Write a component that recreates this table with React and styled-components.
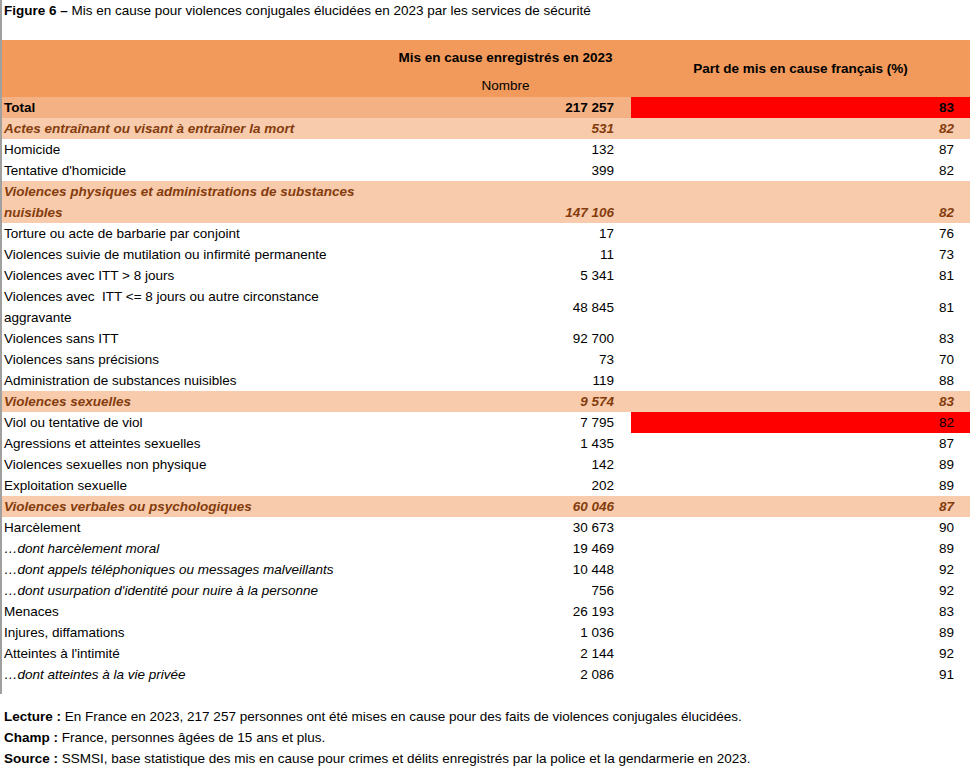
import React from 'react';
import styled, { createGlobalStyle, css } from 'styled-components';

const GlobalStyle = createGlobalStyle`
  html, body {
    margin: 0;
    padding: 0;
    background: #ffffff;
  }
  body {
    font-family: "Liberation Sans", Arial, sans-serif;
    color: #000000;
  }
`;

const Page = styled.div`
  width: 972px;
  height: 769px;
  overflow: hidden;
  box-sizing: border-box;
`;

const Framed = styled.div`
  border-left: 2px solid #a0a0a0;
  padding-bottom: 9px;
`;

const Title = styled.div`
  font-size: 13.5px;
  line-height: 21px;
  height: 40px;
  padding-left: 2px;
  white-space: nowrap;

  b {
    font-weight: 700;
  }
`;

const Table = styled.div`
  display: grid;
  grid-template-columns: 378px 251px 339px;
  width: 968px;
  font-size: 13.5px;
`;

const HeadCell = styled.div`
  background: #f19a5b;
  height: 57px;
  display: flex;
  flex-direction: column;
  align-items: center;
  justify-content: ${p => (p.$center ? 'center' : 'flex-start')};
  font-weight: 700;
  white-space: nowrap;
`;

const HeadTitle = styled.div`
  margin-top: ${p => (p.$top ? '8px' : '0')};
  line-height: 20px;
  font-weight: 700;
`;

const HeadSub = styled.div`
  margin-top: 8px;
  line-height: 20px;
  font-weight: 400;
`;

const rowStyles = {
  total: css`
    background: #f4b183;
    font-weight: 700;
  `,
  section: css`
    background: #f8cbad;
    color: #843c0c;
    font-weight: 700;
    font-style: italic;
  `,
  normal: css`
    background: #ffffff;
  `,
  sub: css`
    background: #ffffff;
    font-style: italic;
  `,
};

const Label = styled.div`
  ${p => rowStyles[p.$kind]}
  padding-left: 2px;
  line-height: 21px;
  white-space: nowrap;
`;

const Value = styled.div`
  ${p => rowStyles[p.$kind]}
  ${p => p.$kind === 'sub' && css`font-style: normal;`}
  ${p => p.$red && css`background: #ff0000;`}
  display: flex;
  justify-content: flex-end;
  align-items: ${p => (p.$bottom ? 'flex-end' : 'center')};
  padding-right: ${p => p.$pad}px;
  line-height: 21px;
  white-space: nowrap;
`;

const Notes = styled.div`
  font-size: 13.5px;
  line-height: 21px;
  margin-top: 12px;
  padding: 0 0 0 4px;
  white-space: nowrap;

  b {
    font-weight: 700;
  }
`;

const rows = [
  { kind: 'total', label: 'Total', n: '217 257', p: '83', red: true },
  { kind: 'section', label: 'Actes entraînant ou visant à entraîner la mort', n: '531', p: '82' },
  { kind: 'normal', label: 'Homicide', n: '132', p: '87' },
  { kind: 'normal', label: "Tentative d'homicide", n: '399', p: '82' },
  {
    kind: 'section',
    label: ['Violences physiques et administrations de substances', 'nuisibles'],
    n: '147 106',
    p: '82',
    bottom: true,
  },
  { kind: 'normal', label: 'Torture ou acte de barbarie par conjoint', n: '17', p: '76' },
  { kind: 'normal', label: 'Violences suivie de mutilation ou infirmité permanente', n: '11', p: '73' },
  { kind: 'normal', label: 'Violences avec ITT > 8 jours', n: '5 341', p: '81' },
  {
    kind: 'normal',
    label: ['Violences avec\u00a0 ITT <= 8 jours ou autre circonstance', 'aggravante'],
    n: '48 845',
    p: '81',
  },
  { kind: 'normal', label: 'Violences sans ITT', n: '92 700', p: '83' },
  { kind: 'normal', label: 'Violences sans précisions', n: '73', p: '70' },
  { kind: 'normal', label: 'Administration de substances nuisibles', n: '119', p: '88' },
  { kind: 'section', label: 'Violences sexuelles', n: '9 574', p: '83' },
  { kind: 'normal', label: 'Viol ou tentative de viol', n: '7 795', p: '82', red: true },
  { kind: 'normal', label: 'Agressions et atteintes sexuelles', n: '1 435', p: '87' },
  { kind: 'normal', label: 'Violences sexuelles non physique', n: '142', p: '89' },
  { kind: 'normal', label: 'Exploitation sexuelle', n: '202', p: '89' },
  { kind: 'section', label: 'Violences verbales ou psychologiques', n: '60 046', p: '87' },
  { kind: 'normal', label: 'Harcèlement', n: '30 673', p: '90' },
  { kind: 'sub', label: '…dont harcèlement moral', n: '19 469', p: '89' },
  { kind: 'sub', label: '…dont appels téléphoniques ou messages malveillants', n: '10 448', p: '92' },
  { kind: 'sub', label: "…dont usurpation d'identité pour nuire à la personne", n: '756', p: '92' },
  { kind: 'normal', label: 'Menaces', n: '26 193', p: '83' },
  { kind: 'normal', label: 'Injures, diffamations', n: '1 036', p: '89' },
  { kind: 'normal', label: "Atteintes à l'intimité", n: '2 144', p: '92' },
  { kind: 'sub', label: '…dont atteintes à la vie privée', n: '2 086', p: '91' },
];

const App = () => {
  return (
    <Page>
      <GlobalStyle />
      <Framed>
        <Title>
          <b>Figure 6 –</b> Mis en cause pour violences conjugales élucidées en 2023 par les services de sécurité
        </Title>

        <Table>
          <HeadCell />
          <HeadCell>
            <HeadTitle $top>Mis en cause enregistrés en 2023</HeadTitle>
            <HeadSub>Nombre</HeadSub>
          </HeadCell>
          <HeadCell $center>
            <HeadTitle>Part de mis en cause français (%)</HeadTitle>
          </HeadCell>

          {rows.map((row, i) => (
            <React.Fragment key={i}>
              <Label $kind={row.kind}>
                {Array.isArray(row.label)
                  ? row.label.map((line, j) => <div key={j}>{line}</div>)
                  : row.label}
              </Label>
              <Value $kind={row.kind} $pad={17} $bottom={row.bottom}>
                {row.n}
              </Value>
              <Value $kind={row.kind} $pad={16} $bottom={row.bottom} $red={row.red}>
                {row.p}
              </Value>
            </React.Fragment>
          ))}
        </Table>
      </Framed>

      <Notes>
        <div>
          <b>Lecture :</b> En France en 2023, 217 257 personnes ont été mises en cause pour des faits de violences conjugales élucidées.
        </div>
        <div>
          <b>Champ :</b> France, personnes âgées de 15 ans et plus.
        </div>
        <div>
          <b>Source :</b> SSMSI, base statistique des mis en cause pour crimes et délits enregistrés par la police et la gendarmerie en 2023.
        </div>
      </Notes>
    </Page>
  );
};

export default App;
